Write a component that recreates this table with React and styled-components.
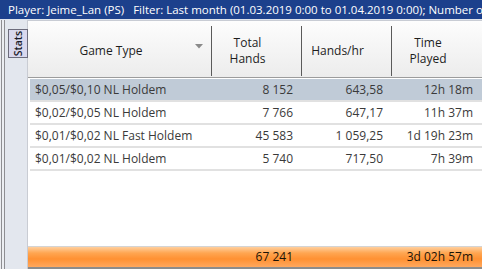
import React from "react";
import styled, { createGlobalStyle } from "styled-components";

const Global = createGlobalStyle`
  html, body { margin: 0; padding: 0; background: #ffffff; }
  body { font-family: "Open Sans", "Noto Sans", Arial, sans-serif; font-size: 12px; overflow: hidden; }
  * { box-sizing: border-box; }
`;

const Window = styled.div`
  width: 482px;
  height: 269px;
  display: flex;
  flex-direction: column;
  overflow: hidden;
  background: #ffffff;
`;

const TitleBar = styled.div`
  height: 20px;
  flex: none;
  background: #1c408c;
  color: #ffffff;
  padding-left: 8px;
  font-size: 11.5px;
  line-height: 19px;
  white-space: nowrap;
  overflow: hidden;
  border-bottom: 1px solid #dfe4ec;
`;

const Gap = styled.span`
  display: inline-block;
  width: ${p => p.$w}px;
`;

const Body = styled.div`
  flex: 1;
  display: flex;
  min-height: 0;
`;

const SidePanel = styled.div`
  width: 28px;
  flex: none;
  background: linear-gradient(to right, #eceef2 0 1px, #8e8e92 1px 2px, #eceef2 2px 4px, #8e8e92 4px 5px, #e3e7ee 5px 27px, #c9ccd3 27px 28px);
  padding: 9px 0 0 8px;
`;

const StatsTab = styled.div`
  width: 20px;
  height: 29px;
  background: #d9d8ee;
  border: 1px solid #6c6c7c;
  display: flex;
  align-items: center;
  justify-content: center;
`;

const TabLabel = styled.span`
  writing-mode: vertical-rl;
  transform: rotate(180deg);
  font-size: 10.5px;
  font-weight: 600;
  color: #1a1a2a;
  line-height: 1;
`;

const Main = styled.div`
  flex: 1;
  min-width: 0;
  display: flex;
  flex-direction: column;
  border-top: 1px solid #c8ccd4;
`;

const GRID = "184px 90px 90px 90px";

const Header = styled.div`
  display: grid;
  grid-template-columns: ${GRID};
  height: 57px;
  flex: none;
  background: linear-gradient(#fdfdfd, #ececec);
  border-bottom: 1px solid #9c9c9c;
  padding-top: 5px;
`;

const HeadCell = styled.div`
  position: relative;
  display: flex;
  align-items: center;
  justify-content: center;
  text-align: center;
  padding-right: ${p => (p.$first ? 17 : 18)}px;
  color: #1e1e1e;
  font-size: 12px;
  line-height: 16px;
  ${p => !p.$last && `border-right: 1px solid #5a5a5a;`}
  margin-bottom: 1px;
`;

const SortArrow = styled.svg`
  position: absolute;
  right: 8px;
  top: 18px;
`;

const Rows = styled.div`
  flex: 1;
  padding: 1px 0 0 2px;
`;

const Row = styled.div`
  display: grid;
  grid-template-columns: 182px 90px 90px 90px;
  height: 23px;
  border-bottom: 2px solid #e1e1e1;
  background: ${p => (p.$selected ? "#c0cbd7" : "#ffffff")};
  color: #3a3a3a;
  line-height: 22px;
  white-space: nowrap;
`;

const Cell = styled.div`
  padding: ${p => (p.$num ? "0 9px 0 0" : "0 0 0 5px")};
  text-align: ${p => (p.$num ? "right" : "left")};
  overflow: hidden;
`;

const Footer = styled.div`
  display: grid;
  grid-template-columns: ${GRID};
  height: 23px;
  flex: none;
  border-top: 1px solid #d4d4d4;
  border-bottom: 2px solid #8c8c8c;
  background: linear-gradient(#ffcf9e 0%, #ffa651 30%, #ff9132 60%, #ffa85e 100%);
  color: #1a1206;
  line-height: 20px;
  white-space: nowrap;
`;

const rows = [
  ["$0,05/$0,10 NL Holdem", "8 152", "643,58", "12h 18m"],
  ["$0,02/$0,05 NL Holdem", "7 766", "647,17", "11h 37m"],
  ["$0,01/$0,02 NL Fast Holdem", "45 583", "1 059,25", "1d 19h 23m"],
  ["$0,01/$0,02 NL Holdem", "5 740", "717,50", "7h 39m"],
];

export default function App() {
  return (
    <>
      <Global />
      <Window>
        <TitleBar>
          Player: Jeime_Lan (PS)<Gap $w={9} />Filter: Last month (01.03.2019 0:00 to 01.04.2019 0:00); Number of players: 2-10
        </TitleBar>
        <Body>
          <SidePanel>
            <StatsTab>
              <TabLabel>Stats</TabLabel>
            </StatsTab>
          </SidePanel>
          <Main>
            <Header>
              <HeadCell $first>
                Game Type
                <SortArrow width="8" height="5" viewBox="0 0 8 5">
                  <path d="M0 0 H8 L4 4.5 Z" fill="#8a8a8a" />
                </SortArrow>
              </HeadCell>
              <HeadCell>Total<br />Hands</HeadCell>
              <HeadCell>Hands/hr</HeadCell>
              <HeadCell $last>Time<br />Played</HeadCell>
            </Header>
            <Rows>
              {rows.map((r, i) => (
                <Row key={i} $selected={i === 0}>
                  <Cell>{r[0]}</Cell>
                  <Cell $num>{r[1]}</Cell>
                  <Cell $num>{r[2]}</Cell>
                  <Cell $num>{r[3]}</Cell>
                </Row>
              ))}
            </Rows>
            <Footer>
              <Cell />
              <Cell $num>67 241</Cell>
              <Cell $num />
              <Cell $num>3d 02h 57m</Cell>
            </Footer>
          </Main>
        </Body>
      </Window>
    </>
  );
}
